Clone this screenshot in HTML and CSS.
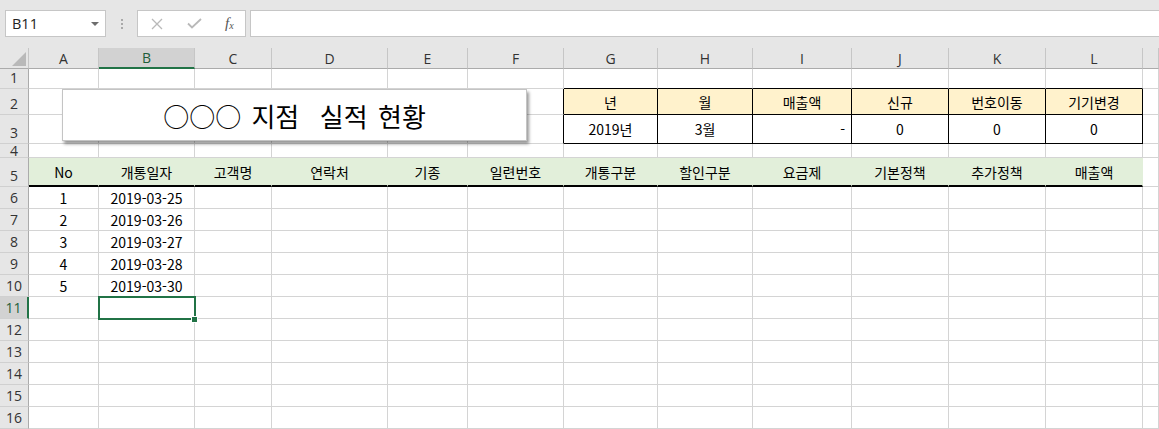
FILE: index.html
```html
<!DOCTYPE html>
<html lang="ko">
<head>
    <meta charset="UTF-8">
    <meta name="viewport" content="width=device-width, initial-scale=1.0">
    <title>실적 현황</title>
    <link rel="stylesheet" href="styles.css">
</head>
<body>
    <div class="toolbar">
        <div class="namebox">
            <span class="namebox-text">B11</span>
            <svg class="caret" width="8" height="4" viewBox="0 0 8 4"><path d="M0 0H8L4 4Z" fill="#6d6d6d"/></svg>
        </div>
        <div class="grip">
            <span></span><span></span><span></span>
        </div>
        <div class="fx-buttons">
            <svg class="btn-x" width="12" height="12" viewBox="0 0 12 12"><path d="M1 1L11 11M11 1L1 11" stroke="#b9b9b9" stroke-width="1.3" fill="none"/></svg>
            <svg class="btn-ok" width="15" height="11" viewBox="0 0 15 11"><path d="M1 5.5L5 9.5L14 1" stroke="#b9b9b9" stroke-width="1.8" fill="none"/></svg>
            <span class="btn-fx">f<sub>x</sub></span>
        </div>
        <div class="formula"></div>
    </div>

    <div class="sheet">
        <!-- column headers -->
        <div class="corner"><svg width="14" height="14" viewBox="0 0 14 14"><path d="M14 0V14H0Z" fill="#b9b9b9"/></svg></div>
        <div class="ch">A</div>
        <div class="ch sel-col">B</div>
        <div class="ch">C</div>
        <div class="ch">D</div>
        <div class="ch">E</div>
        <div class="ch">F</div>
        <div class="ch">G</div>
        <div class="ch">H</div>
        <div class="ch">I</div>
        <div class="ch">J</div>
        <div class="ch">K</div>
        <div class="ch">L</div>
        <div class="ch"></div>

        <!-- row 1 -->
        <div class="rh">1</div>
        <div class="cell"></div><div class="cell"></div><div class="cell"></div><div class="cell"></div><div class="cell"></div><div class="cell"></div>
        <div class="cell box-t"></div><div class="cell box-t"></div><div class="cell box-t"></div><div class="cell box-t"></div><div class="cell box-t"></div><div class="cell box-t"></div>
        <div class="cell"></div>

        <!-- row 2 -->
        <div class="rh">2</div>
        <div class="cell"></div><div class="cell"></div><div class="cell"></div><div class="cell"></div><div class="cell"></div>
        <div class="cell box-l"></div>
        <div class="cell box yellow">년</div>
        <div class="cell box yellow">월</div>
        <div class="cell box yellow">매출액</div>
        <div class="cell box yellow">신규</div>
        <div class="cell box yellow">번호이동</div>
        <div class="cell box yellow">기기변경</div>
        <div class="cell"></div>

        <!-- row 3 -->
        <div class="rh">3</div>
        <div class="cell"></div><div class="cell"></div><div class="cell"></div><div class="cell"></div><div class="cell"></div>
        <div class="cell box-l"></div>
        <div class="cell box">2019년</div>
        <div class="cell box">3월</div>
        <div class="cell box acct">-</div>
        <div class="cell box">0</div>
        <div class="cell box">0</div>
        <div class="cell box">0</div>
        <div class="cell"></div>

        <!-- row 4 -->
        <div class="rh rh-short">4</div>
        <div class="cell"></div><div class="cell"></div><div class="cell"></div><div class="cell"></div><div class="cell"></div><div class="cell"></div>
        <div class="cell"></div><div class="cell"></div><div class="cell"></div><div class="cell"></div><div class="cell"></div><div class="cell"></div>
        <div class="cell"></div>

        <!-- row 5 -->
        <div class="rh">5</div>
        <div class="cell hd">No</div>
        <div class="cell hd">개통일자</div>
        <div class="cell hd">고객명</div>
        <div class="cell hd">연락처</div>
        <div class="cell hd">기종</div>
        <div class="cell hd">일련번호</div>
        <div class="cell hd">개통구분</div>
        <div class="cell hd">할인구분</div>
        <div class="cell hd">요금제</div>
        <div class="cell hd">기본정책</div>
        <div class="cell hd">추가정책</div>
        <div class="cell hd">매출액</div>
        <div class="cell"></div>

        <!-- rows 6-10 -->
        <div class="rh">6</div>
        <div class="cell">1</div><div class="cell">2019-03-25</div>
        <div class="cell"></div><div class="cell"></div><div class="cell"></div><div class="cell"></div><div class="cell"></div><div class="cell"></div><div class="cell"></div><div class="cell"></div><div class="cell"></div><div class="cell"></div><div class="cell"></div>

        <div class="rh">7</div>
        <div class="cell">2</div><div class="cell">2019-03-26</div>
        <div class="cell"></div><div class="cell"></div><div class="cell"></div><div class="cell"></div><div class="cell"></div><div class="cell"></div><div class="cell"></div><div class="cell"></div><div class="cell"></div><div class="cell"></div><div class="cell"></div>

        <div class="rh">8</div>
        <div class="cell">3</div><div class="cell">2019-03-27</div>
        <div class="cell"></div><div class="cell"></div><div class="cell"></div><div class="cell"></div><div class="cell"></div><div class="cell"></div><div class="cell"></div><div class="cell"></div><div class="cell"></div><div class="cell"></div><div class="cell"></div>

        <div class="rh">9</div>
        <div class="cell">4</div><div class="cell">2019-03-28</div>
        <div class="cell"></div><div class="cell"></div><div class="cell"></div><div class="cell"></div><div class="cell"></div><div class="cell"></div><div class="cell"></div><div class="cell"></div><div class="cell"></div><div class="cell"></div><div class="cell"></div>

        <div class="rh">10</div>
        <div class="cell">5</div><div class="cell">2019-03-30</div>
        <div class="cell"></div><div class="cell"></div><div class="cell"></div><div class="cell"></div><div class="cell"></div><div class="cell"></div><div class="cell"></div><div class="cell"></div><div class="cell"></div><div class="cell"></div><div class="cell"></div>

        <!-- row 11 (active cell B11) -->
        <div class="rh sel-row">11</div>
        <div class="cell"></div>
        <div class="cell active"><span class="handle"></span></div>
        <div class="cell"></div><div class="cell"></div><div class="cell"></div><div class="cell"></div><div class="cell"></div><div class="cell"></div><div class="cell"></div><div class="cell"></div><div class="cell"></div><div class="cell"></div><div class="cell"></div>

        <!-- rows 12-16 -->
        <div class="rh">12</div>
        <div class="cell"></div><div class="cell"></div><div class="cell"></div><div class="cell"></div><div class="cell"></div><div class="cell"></div><div class="cell"></div><div class="cell"></div><div class="cell"></div><div class="cell"></div><div class="cell"></div><div class="cell"></div><div class="cell"></div>

        <div class="rh">13</div>
        <div class="cell"></div><div class="cell"></div><div class="cell"></div><div class="cell"></div><div class="cell"></div><div class="cell"></div><div class="cell"></div><div class="cell"></div><div class="cell"></div><div class="cell"></div><div class="cell"></div><div class="cell"></div><div class="cell"></div>

        <div class="rh">14</div>
        <div class="cell"></div><div class="cell"></div><div class="cell"></div><div class="cell"></div><div class="cell"></div><div class="cell"></div><div class="cell"></div><div class="cell"></div><div class="cell"></div><div class="cell"></div><div class="cell"></div><div class="cell"></div><div class="cell"></div>

        <div class="rh">15</div>
        <div class="cell"></div><div class="cell"></div><div class="cell"></div><div class="cell"></div><div class="cell"></div><div class="cell"></div><div class="cell"></div><div class="cell"></div><div class="cell"></div><div class="cell"></div><div class="cell"></div><div class="cell"></div><div class="cell"></div>

        <div class="rh">16</div>
        <div class="cell"></div><div class="cell"></div><div class="cell"></div><div class="cell"></div><div class="cell"></div><div class="cell"></div><div class="cell"></div><div class="cell"></div><div class="cell"></div><div class="cell"></div><div class="cell"></div><div class="cell"></div><div class="cell"></div>

        <!-- floating title shape -->
        <div class="title-shape">○○○ 지점  실적 현황</div>
    </div>
</body>
</html>
```

FILE: styles.css
```css
body {
    margin: 0;
    width: 1159px;
    height: 429px;
    overflow: hidden;
    background: #ffffff;
    font-family: "Noto Sans CJK KR", "Noto Sans", sans-serif;
}

/* formula bar */
.toolbar {
    height: 48px;
    box-sizing: border-box;
    padding: 10px 0 0 5px;
    background: #e6e6e6;
    display: flex;
    align-items: flex-start;
}

.namebox {
    width: 101px;
    height: 27px;
    box-sizing: border-box;
    border: 1px solid #c6c6c6;
    background: #fff;
    display: flex;
    align-items: center;
    justify-content: space-between;
    padding: 0 6px 0 6px;
}

.namebox-text {
    font-family: "Open Sans", "Noto Sans", sans-serif;
    font-size: 14.5px;
    color: #222;
}

.grip {
    width: 31px;
    height: 27px;
    display: flex;
    flex-direction: column;
    align-items: center;
    justify-content: center;
    gap: 2px;
}

.grip span {
    width: 2px;
    height: 2px;
    background: #a9a9a9;
}

.fx-buttons {
    width: 109px;
    height: 27px;
    box-sizing: border-box;
    border: 1px solid #c6c6c6;
    background: #fff;
    display: flex;
    align-items: center;
    padding-left: 13px;
}

.btn-x {
    margin-right: 24px;
}

.btn-ok {
    margin-right: 23px;
}

.btn-fx {
    font-family: "Liberation Serif", serif;
    font-style: italic;
    font-size: 15px;
    color: #555;
    line-height: 1;
}

.btn-fx sub {
    font-size: 10px;
    vertical-align: -1px;
}

.formula {
    flex: 1;
    height: 27px;
    margin-left: 4px;
    box-sizing: border-box;
    border: 1px solid #c6c6c6;
    border-right: none;
    background: #fff;
}

/* sheet grid */
.sheet {
    position: relative;
    display: grid;
    grid-template-columns: 29px 70px 96px 77px 116px 80px 96px 94px 95px 99px 97px 97px 97px 16px;
    grid-template-rows: 21px 20px 26px 29px 14px 29px repeat(11, 22px);
}

.corner {
    background: #e6e6e6;
    border-right: 1px solid #c6c6c6;
    border-bottom: 1px solid #ababab;
    display: flex;
    align-items: flex-end;
    justify-content: flex-end;
    padding: 0 2px 2px 0;
}

.corner,
.ch,
.rh,
.cell {
    box-sizing: border-box;
    overflow: hidden;
    white-space: nowrap;
}

.ch {
    background: #e6e6e6;
    border-right: 1px solid #c6c6c6;
    border-bottom: 1px solid #ababab;
    display: flex;
    align-items: center;
    justify-content: center;
    font-family: "Open Sans", "Noto Sans", sans-serif;
    font-size: 14px;
    color: #333;
}

.ch.sel-col {
    background: #d2d2d2;
    border-bottom: 2px solid #217346;
    color: #1e5e3a;
}

.rh {
    background: #e6e6e6;
    border-right: 1px solid #ababab;
    border-bottom: 1px solid #d0d0d0;
    display: flex;
    align-items: flex-end;
    justify-content: center;
    font-family: "Open Sans", "Noto Sans", sans-serif;
    font-size: 14px;
    line-height: 20px;
    color: #333;
}

.rh.rh-short {
    line-height: 13px;
}

.rh.sel-row {
    background: #d2d2d2;
    border-right: 2px solid #217346;
    color: #1e5e3a;
}

.cell {
    border-right: 1px solid #d4d4d4;
    border-bottom: 1px solid #d4d4d4;
    display: flex;
    align-items: center;
    justify-content: center;
    font-size: 14px;
    color: #000;
}

/* small summary box G2:L3 */
.box {
    border-right-color: #000;
    border-bottom-color: #000;
}

.box-l {
    border-right-color: #000;
}

.box-t {
    border-bottom-color: #000;
}

.yellow {
    background: #fff2cc;
}

.acct {
    justify-content: flex-end;
    padding-right: 6px;
}

/* table header row */
.hd {
    background: #e2efda;
    border-right-color: transparent;
    border-bottom: 2px solid #000;
}

/* active cell */
.active {
    position: relative;
    overflow: visible;
}

.active::before {
    content: "";
    position: absolute;
    left: -1px;
    top: -1px;
    width: 98px;
    height: 24px;
    box-sizing: border-box;
    border: 2px solid #217346;
}

.handle {
    position: absolute;
    left: 92px;
    top: 19px;
    width: 7px;
    height: 7px;
    box-sizing: border-box;
    background: #217346;
    border: 1px solid #fff;
    z-index: 2;
}

/* floating text box */
.title-shape {
    position: absolute;
    left: 62px;
    top: 41px;
    width: 465px;
    height: 52px;
    box-sizing: border-box;
    background: #fff;
    border: 1px solid #c4c4c4;
    box-shadow: 2px 3px 3px rgba(0, 0, 0, 0.4);
    display: flex;
    align-items: center;
    justify-content: center;
    white-space: pre;
    font-size: 26px;
    word-spacing: 3px;
    color: #000;
}
```
